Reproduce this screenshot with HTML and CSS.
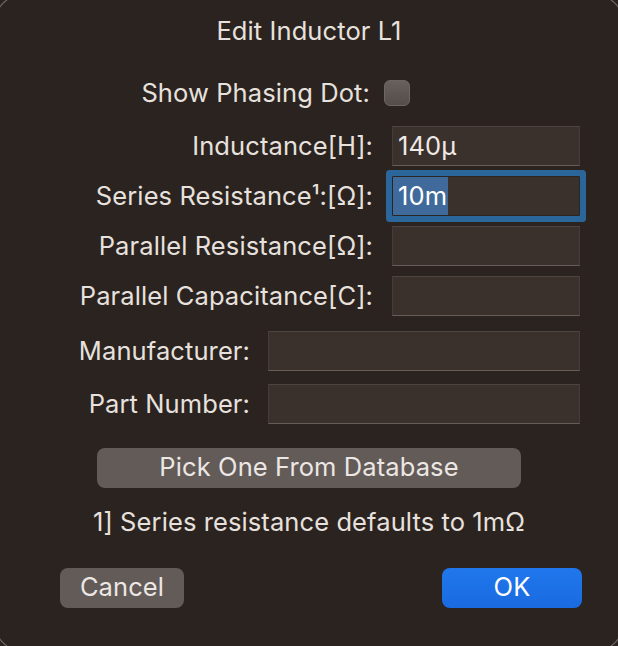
FILE: index.html
```html
<!DOCTYPE html>
<html>
<head>
<meta charset="utf-8">
<link rel="stylesheet" href="styles.css">
</head>
<body>
<div class="window">
  <div class="dialog">
    <div class="title">Edit Inductor L1</div>

    <div class="grid check-row">
      <div class="label">Show Phasing Dot:</div>
      <div class="checkbox"></div>
    </div>

    <div class="grid fields">
      <div class="label">Inductance[H]:</div>
      <div class="field">140µ</div>
      <div class="label">Series Resistance¹:[Ω]:</div>
      <div class="field focused"><span class="sel">10m</span></div>
      <div class="label">Parallel Resistance[Ω]:</div>
      <div class="field"></div>
      <div class="label">Parallel Capacitance[C]:</div>
      <div class="field"></div>
    </div>

    <div class="grid fields2">
      <div class="label">Manufacturer:</div>
      <div class="field"></div>
      <div class="label">Part Number:</div>
      <div class="field"></div>
    </div>

    <div class="pick-wrap">
      <div class="btn pick">Pick One From Database</div>
    </div>

    <div class="note">1] Series resistance defaults to 1mΩ</div>

    <div class="actions">
      <div class="btn cancel">Cancel</div>
      <div class="btn ok">OK</div>
    </div>
  </div>
</div>
</body>
</html>
```
FILE: styles.css
```css
html, body {
  margin: 0;
  padding: 0;
  background: #2b2320;
  width: 618px;
  height: 646px;
  overflow: hidden;
}

body {
  font-family: Inter, "Open Sans", "Liberation Sans", sans-serif;
  color: #e7e1de;
  font-size: 25.5px;
  letter-spacing: 0.1px;
}

.window {
  margin: -6px;
  width: 630px;
  height: 658px;
  border-radius: 30px;
  box-shadow: inset 0 0 0 1px rgba(200, 195, 192, 0.45);
  background: #2b2320;
  box-sizing: border-box;
  padding: 6px;
}

.dialog {
  width: 618px;
  height: 646px;
}

.title {
  text-align: center;
  font-size: 25.5px;
  line-height: 28px;
  padding-top: 17px;
}

.grid {
  display: grid;
  align-items: center;
}

.label {
  text-align: right;
  white-space: nowrap;
  line-height: 30px;
}

.check-row {
  grid-template-columns: 370px 26px;
  column-gap: 14px;
  margin-top: 33px;
}

.checkbox {
  width: 24px;
  height: 24px;
  border-radius: 6px;
  border: 1px solid #6d6562;
  background: linear-gradient(#67605d, #544d4a);
}

.fields {
  grid-template-columns: 373px 188px;
  column-gap: 19px;
  row-gap: 10px;
  margin-top: 18px;
}

.fields2 {
  grid-template-columns: 250px 312px;
  column-gap: 18px;
  row-gap: 13px;
  margin-top: 15px;
}

.field {
  height: 40px;
  box-sizing: border-box;
  background: #3a302c;
  border: 1px solid #463c38;
  border-top-color: #4d4340;
  border-bottom-color: #675d58;
  padding-left: 5px;
  line-height: 38px;
  color: #eee9e6;
}

.field.focused {
  border-radius: 1px;
  border-color: #2a2523;
  box-shadow: 0 0 0 6px #2b669a;
  padding-left: 0;
}

.sel {
  display: inline-block;
  height: 38px;
  padding: 0 1px 0 5px;
  background: #3f6a9b;
  color: #ffffff;
}

.pick-wrap {
  padding-left: 97px;
  margin-top: 24px;
}

.btn {
  height: 40px;
  border-radius: 8px;
  background: #625b58;
  text-align: center;
  line-height: 38px;
  color: #ece7e4;
  box-sizing: border-box;
}

.pick {
  width: 424px;
}

.note {
  text-align: center;
  line-height: 30px;
  margin-top: 19px;
}

.actions {
  display: flex;
  justify-content: space-between;
  padding: 0 36px 0 60px;
  margin-top: 31px;
}

.cancel {
  width: 124px;
}

.ok {
  width: 140px;
  background: linear-gradient(#2077ec, #1a6ae0);
  color: #ffffff;
}
```
